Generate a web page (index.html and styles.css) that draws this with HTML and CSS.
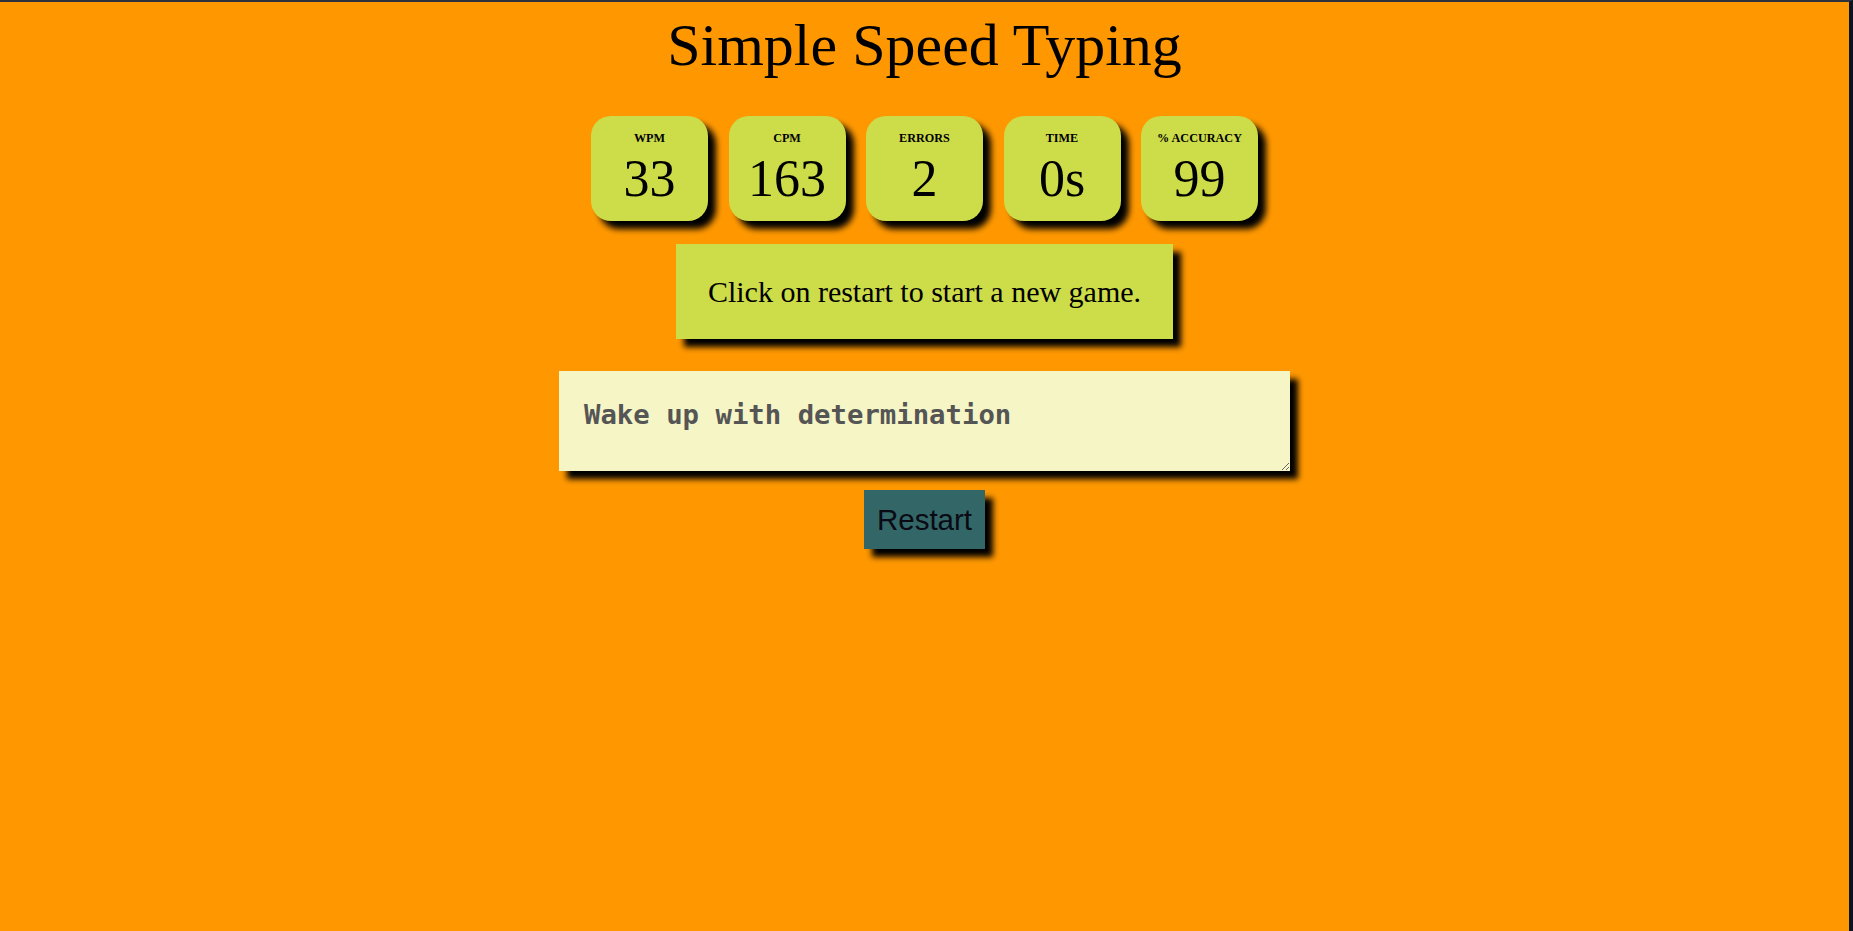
FILE: index.html
```html
<!DOCTYPE html>
<html lang="en">
<head>
<meta charset="utf-8">
<title>Simple Speed Typing</title>
<link rel="stylesheet" href="styles.css">
</head>
<body>
<main class="app">
  <h1 class="title">Simple Speed Typing</h1>
  <section class="stats">
    <div class="stat">
      <div class="stat-label">WPM</div>
      <div class="stat-value">33</div>
    </div>
    <div class="stat">
      <div class="stat-label">CPM</div>
      <div class="stat-value">163</div>
    </div>
    <div class="stat">
      <div class="stat-label">ERRORS</div>
      <div class="stat-value">2</div>
    </div>
    <div class="stat">
      <div class="stat-label">TIME</div>
      <div class="stat-value">0s</div>
    </div>
    <div class="stat">
      <div class="stat-label">% ACCURACY</div>
      <div class="stat-value">99</div>
    </div>
  </section>
  <div class="quote">Click on restart to start a new game.</div>
  <textarea class="input-area">Wake up with determination</textarea>
  <button class="restart">Restart</button>
</main>
</body>
</html>
```

FILE: styles.css
```css
html {
  background: #0c1422;
  height: 100%;
}

body {
  margin: 0;
  min-height: 100%;
  box-sizing: border-box;
  background: #ff9800;
  border-top: 2px solid #2e323c;
  border-right: 4px solid #0c1422;
  font-family: "Liberation Serif", "Times New Roman", serif;
  color: #000;
}

.app {
  display: flex;
  flex-direction: column;
  align-items: center;
}

.title {
  margin: 9px 0 0;
  font-size: 60px;
  font-weight: normal;
  line-height: 68px;
}

.stats {
  display: flex;
  gap: 20.5px;
  margin-top: 37px;
}

.stat {
  width: 117px;
  height: 105px;
  box-sizing: border-box;
  padding-top: 15px;
  background: #cddc49;
  border-radius: 20px;
  box-shadow: 8px 8px 6px #000;
  text-align: center;
}

.stat-label {
  font-size: 12.2px;
  font-weight: bold;
  line-height: 14px;
}

.stat-value {
  margin-top: 5px;
  font-size: 52px;
  line-height: 58px;
}

.quote {
  margin-top: 23px;
  padding: 31px 32px 30px;
  background: #cddc49;
  box-shadow: 8px 8px 6px #000;
  font-size: 30px;
  line-height: 34px;
}

.input-area {
  margin-top: 32px;
  width: 731px;
  height: 100px;
  box-sizing: border-box;
  padding: 28px 25px 26px;
  border: none;
  background: #f6f5c6;
  box-shadow: 8px 8px 6px #000;
  font-family: "DejaVu Sans Mono", "Liberation Mono", monospace;
  font-weight: bold;
  font-size: 27.3px;
  color: #555;
}

.restart {
  margin-top: 19px;
  width: 121px;
  height: 59px;
  padding: 0;
  border: none;
  background: #336666;
  box-shadow: 8px 8px 6px #000;
  font-family: "Liberation Sans", Arial, sans-serif;
  font-size: 29.5px;
  color: #0a0a14;
}
```
